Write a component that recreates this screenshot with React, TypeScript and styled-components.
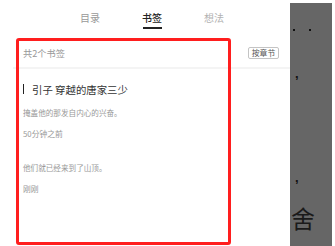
import styled, { createGlobalStyle } from 'styled-components';

let Global = createGlobalStyle`
  body {
    margin: 0;
    background: #fff;
    font-family: "Noto Sans CJK SC", "Liberation Sans", sans-serif;
  }
`;

let Page = styled.div`
  position: relative;
  display: flex;
  width: 335px;
  height: 246px;
  overflow: hidden;
`;

let Panel = styled.div`
  width: 290px;
  display: flex;
  flex-direction: column;
`;

let Tabs = styled.div`
  display: flex;
  justify-content: center;
  gap: 42px;
  height: 38px;
  padding-left: 14px;
`;

let Tab = styled.div<{ active?: boolean; faint?: boolean }>`
  display: flex;
  flex-direction: column;
  align-items: center;
  width: 20px;
  padding-top: 13px;
  font-size: 10px;
  line-height: 10px;
  white-space: nowrap;
  font-weight: ${p => (p.active ? 500 : 400)};
  color: ${p => (p.active ? '#222' : p.faint ? '#b2b2b2' : '#999')};

  &::after {
    content: '';
    display: ${p => (p.active ? 'block' : 'none')};
    width: 19px;
    height: 2px;
    margin-top: 4px;
    background: #222;
  }
`;

let Header = styled.div`
  display: flex;
  align-items: center;
  justify-content: space-between;
  height: 29px;
  margin-left: 13px;
  padding: 0 11px 0 10px;
  border-bottom: 2px solid #f4f4f4;
`;

let Count = styled.div`
  font-size: 9.2px;
  color: #999;
`;

let ChapterButton = styled.div`
  width: 29px;
  height: 10px;
  border: 1px solid #c4c4c4;
  border-radius: 2px;
  font-size: 7.8px;
  line-height: 10px;
  text-align: center;
  color: #555;
`;

let List = styled.div`
  padding-left: 23px;
`;

let Item = styled.div`
  padding: 14px 0 10px;
`;

let Title = styled.div`
  display: flex;
  align-items: center;
  gap: 8px;
  height: 12px;
  margin-bottom: 13px;
  font-size: 10.4px;
  color: #333;
  white-space: nowrap;

  &::before {
    content: '';
    width: 1px;
    height: 10px;
    background: #222;
  }
`;

let Quote = styled.div`
  font-size: 7.6px;
  line-height: 10px;
  color: #999;
  white-space: nowrap;
`;

let Time = styled.div`
  margin-top: 11px;
  font-size: 7.8px;
  line-height: 10px;
  color: #999;
`;

let Side = styled.div`
  width: 42px;
  margin-top: 3px;
  background: #666;
  display: flex;
  flex-direction: column;
  padding-left: 3px;
  box-sizing: border-box;
`;

let Dots = styled.div`
  display: flex;
  gap: 14px;
  margin-top: 26px;
`;

let Dot = styled.span`
  width: 2px;
  height: 1.5px;
  background: #111;
`;

let Comma = styled.div<{ top: number }>`
  margin-top: ${p => p.top}px;
  margin-left: 2px;
  font-family: "Liberation Sans", sans-serif;
  font-weight: 700;
  font-size: 13px;
  line-height: 10px;
  color: #111;
`;

let BigChar = styled.div`
  margin-top: 22px;
  margin-left: -2px;
  font-size: 24px;
  line-height: 26px;
  color: #1a1a1a;
`;

let Highlight = styled.div`
  position: absolute;
  left: 16px;
  top: 38px;
  width: 209px;
  height: 201px;
  border: 3px solid #ff1e1e;
  border-radius: 3px;
  pointer-events: none;
`;

let bookmarks = [
  { title: '引子 穿越的唐家三少', quote: '掩盖他的那发自内心的兴奋。', time: '50分钟之前' },
  { title: '', quote: '他们就已经来到了山顶。', time: '刚刚' },
];

export default function App() {
  return (
    <Page>
      <Global />
      <Panel>
        <Tabs>
          <Tab>目录</Tab>
          <Tab active>书签</Tab>
          <Tab faint>想法</Tab>
        </Tabs>
        <Header>
          <Count>共2个书签</Count>
          <ChapterButton>按章节</ChapterButton>
        </Header>
        <List>
          {bookmarks.map((b, i) => (
            <Item key={i}>
              {b.title && <Title>{b.title}</Title>}
              <Quote>{b.quote}</Quote>
              <Time>{b.time}</Time>
            </Item>
          ))}
        </List>
      </Panel>
      <Side>
        <Dots>
          <Dot />
          <Dot />
        </Dots>
        <Comma top={38}>,</Comma>
        <Comma top={94}>,</Comma>
        <BigChar>舍</BigChar>
      </Side>
      <Highlight />
    </Page>
  );
}
